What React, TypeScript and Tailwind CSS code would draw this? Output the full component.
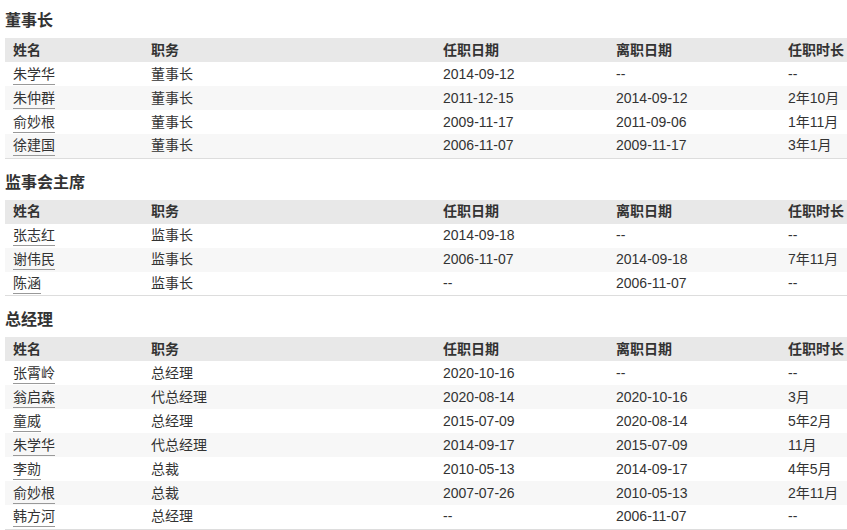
import React from "react";

type Row = [string, string, string, string, string];

const sections: { title: string; rows: Row[] }[] = [
  {
    title: "董事长",
    rows: [
      ["朱学华", "董事长", "2014-09-12", "--", "--"],
      ["朱仲群", "董事长", "2011-12-15", "2014-09-12", "2年10月"],
      ["俞妙根", "董事长", "2009-11-17", "2011-09-06", "1年11月"],
      ["徐建国", "董事长", "2006-11-07", "2009-11-17", "3年1月"],
    ],
  },
  {
    title: "监事会主席",
    rows: [
      ["张志红", "监事长", "2014-09-18", "--", "--"],
      ["谢伟民", "监事长", "2006-11-07", "2014-09-18", "7年11月"],
      ["陈涵", "监事长", "--", "2006-11-07", "--"],
    ],
  },
  {
    title: "总经理",
    rows: [
      ["张霄岭", "总经理", "2020-10-16", "--", "--"],
      ["翁启森", "代总经理", "2020-08-14", "2020-10-16", "3月"],
      ["童威", "总经理", "2015-07-09", "2020-08-14", "5年2月"],
      ["朱学华", "代总经理", "2014-09-17", "2015-07-09", "11月"],
      ["李勍", "总裁", "2010-05-13", "2014-09-17", "4年5月"],
      ["俞妙根", "总裁", "2007-07-26", "2010-05-13", "2年11月"],
      ["韩方河", "总经理", "--", "2006-11-07", "--"],
    ],
  },
];

const headers = ["姓名", "职务", "任职日期", "离职日期", "任职时长"];
const widths = ["w-[138px]", "w-[292px]", "w-[173px]", "w-[172px]", "w-[67px]"];

const ManagerTable = ({ title, rows, first }: { title: string; rows: Row[]; first: boolean }) => {
  return (
    <div className={first ? "mt-[8px]" : "mt-[11px]"}>
      <div className="h-[25px] leading-[25px] text-[16px] font-bold text-[#333] pl-[5px]">{title}</div>
      <table className="table-fixed w-[842px] ml-[5px] mt-[5px] border-collapse border-b border-[#dddddd]">
        <thead>
          <tr className="bg-[#e8e8e8] h-[24px]">
            {headers.map((h, i) => (
              <th key={h} className={`${widths[i]} text-left font-bold pl-[8px] p-0 whitespace-nowrap`}>
                {h}
              </th>
            ))}
          </tr>
        </thead>
        <tbody>
          {rows.map((row, index) => (
            <tr key={`row_${index}`} className={`h-[24px] ${index % 2 === 1 ? "bg-[#f7f7f7]" : "bg-white"}`}>
              <td className="pl-[8px] p-0">
                <span className="inline-block align-middle leading-[19px] border-b border-[#999]">{row[0]}</span>
              </td>
              {row.slice(1).map((cell, i) => (
                <td key={`c_${i}`} className="pl-[8px] p-0 whitespace-nowrap">
                  {cell}
                </td>
              ))}
            </tr>
          ))}
        </tbody>
      </table>
    </div>
  );
};

export default function App() {
  return (
    <div
      className="w-[847px] h-[530px] overflow-hidden bg-white text-[14px] text-[#333]"
      style={{ fontFamily: '"Liberation Sans", "Noto Sans CJK SC", sans-serif' }}
    >
      {sections.map((s, i) => (
        <ManagerTable key={s.title} title={s.title} rows={s.rows} first={i === 0} />
      ))}
    </div>
  );
}
